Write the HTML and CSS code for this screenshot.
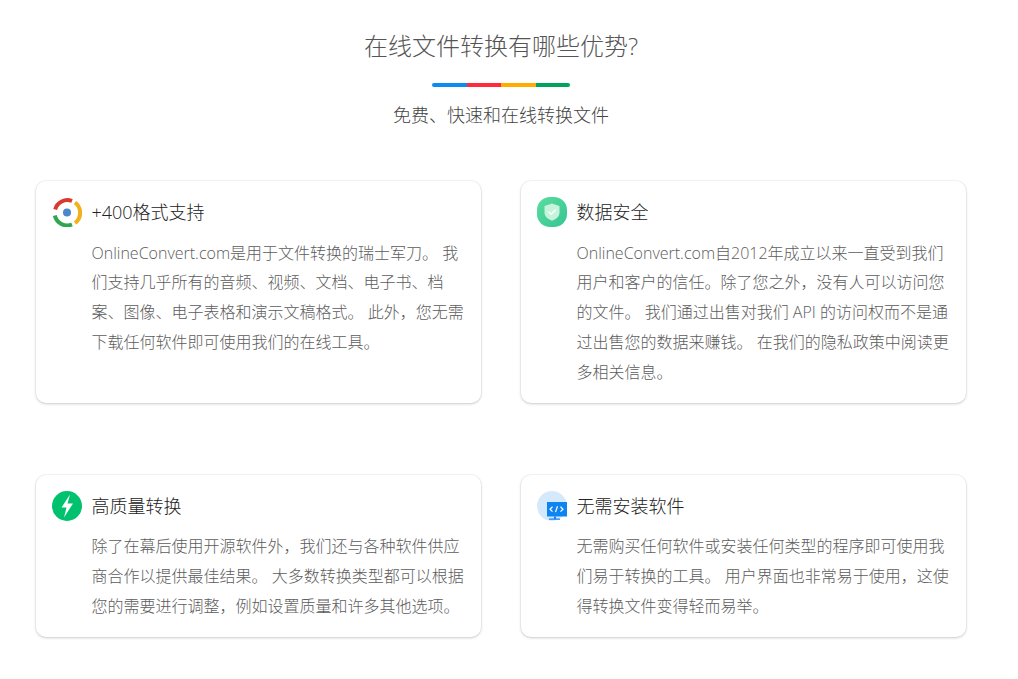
FILE: index.html
```html
<!DOCTYPE html>
<html lang="zh-CN">
<head>
<meta charset="utf-8">
<title>在线文件转换有哪些优势?</title>
<link rel="stylesheet" href="styles.css">
</head>
<body>
<main class="page">
  <header class="intro">
    <h1 class="headline">在线文件转换有哪些优势?</h1>
    <div class="rainbow"><span class="seg blue"></span><span class="seg red"></span><span class="seg amber"></span><span class="seg green"></span></div>
    <p class="subhead">免费、快速和在线转换文件</p>
  </header>
  <section class="cards">
    <article class="card">
      <div class="card-head">
        <svg class="icon" viewBox="0 0 30 30"><g fill="none" stroke-width="4"><path d="M3.200 12.500A12.500 12.500 0 0 1 20 4" stroke="#d93a2f"/><path d="M23 5.500A12.800 12.800 0 0 1 23 26" stroke="#f2b01c"/><path d="M2.800 18.500A12.800 12.800 0 0 0 20 27.500" stroke="#2fa650"/></g><circle cx="15" cy="15.500" r="4" fill="#4a87cb"/></svg>
        <h2 class="card-title">+400格式支持</h2>
      </div>
      <p class="card-text">OnlineConvert.com是用于文件转换的瑞士军刀。 我们支持几乎所有的音频、视频、文档、电子书、档案、图像、电子表格和演示文稿格式。 此外&#65292;您无需下载任何软件即可使用我们的在线工具。</p>
    </article>
    <article class="card">
      <div class="card-head">
        <svg class="icon" viewBox="0 0 30 30"><defs><linearGradient id="shieldbg" x1="0" y1="0" x2="1" y2="1"><stop offset="0" stop-color="#5bdc9f"/><stop offset="1" stop-color="#35c592"/></linearGradient></defs><rect width="30" height="30" rx="13" fill="url(#shieldbg)"/><path d="M15 6.500l7.500 2.400v6.400c0 4.300-3.200 7-7.500 8.400-4.300-1.400-7.500-4.100-7.500-8.400V8.900z" fill="#c6f3dc"/><path d="M11.500 14.800l2.600 2.500 4.600-4.600" fill="none" stroke="#fff" stroke-width="1.500"/></svg>
        <h2 class="card-title">数据安全</h2>
      </div>
      <p class="card-text">OnlineConvert.com自2012年成立以来一直受到我们用户和客户的信任。除了您之外&#65292;没有人可以访问您的文件。 我们通过出售对我们 API 的访问权而不是通过出售您的数据来赚钱。 在我们的隐私政策中阅读更多相关信息。</p>
    </article>
    <article class="card">
      <div class="card-head">
        <svg class="icon" viewBox="0 0 30 30"><circle cx="15" cy="15" r="15" fill="#00c16e"/><path d="M18 3.500L9.500 16.500h5L12 26.500l9-14h-5.500z" fill="#fff"/></svg>
        <h2 class="card-title">高质量转换</h2>
      </div>
      <p class="card-text">除了在幕后使用开源软件外&#65292;我们还与各种软件供应商合作以提供最佳结果。 大多数转换类型都可以根据您的需要进行调整&#65292;例如设置质量和许多其他选项。</p>
    </article>
    <article class="card">
      <div class="card-head">
        <svg class="icon" viewBox="0 0 30 30"><circle cx="15" cy="15" r="15" fill="#d5e9fd"/><path d="M10 11h20v14.500H10z" fill="#0d84f2"/><path d="M12 27.500h11v1.200H12z M17 25.500h2v2h-2z" fill="#0d84f2"/><path d="M15.500 15.800l-2.500 2.400 2.500 2.400M23.500 15.800l2.500 2.400-2.500 2.400M20.500 15.300l-2 5.800" fill="none" stroke="#fff" stroke-width="1.200"/></svg>
        <h2 class="card-title">无需安装软件</h2>
      </div>
      <p class="card-text">无需购买任何软件或安装任何类型的程序即可使用我们易于转换的工具。 用户界面也非常易于使用&#65292;这使得转换文件变得轻而易举。</p>
    </article>
  </section>
</main>
</body>
</html>
```
FILE: styles.css
```css
* { box-sizing: border-box; }
html, body { margin: 0; padding: 0; background: #fff; }
body { font-family: "Open Sans", "Noto Sans CJK SC", sans-serif; font-weight: 300; color: #555; }
.page { width: 1002px; padding: 28px 36px 42px; }
.intro { display: flex; flex-direction: column; align-items: center; }
.headline { margin: 0; font-size: 24px; line-height: 36px; font-weight: 300; color: #555; }
.rainbow { display: flex; width: 138px; height: 4px; margin-top: 19px; border-radius: 2px; overflow: hidden; }
.seg { flex: 1; }
.blue { background: #0a8cf0; }
.red { background: #ff2a3c; }
.amber { background: #ffab00; }
.green { background: #00a35b; }
.subhead { margin: 15px 0 0; font-size: 18px; line-height: 27px; color: #444; }
.cards { display: grid; grid-template-columns: 445px 445px; column-gap: 40px; row-gap: 72px; margin-top: 52px; }
.card { background: #fff; border-radius: 10px; padding: 16px 16px 15.4px; box-shadow: 0 0 0 1px rgba(0,0,0,.03), 0 1px 3px rgba(0,0,0,.18); }
.card-head { display: flex; align-items: center; gap: 9.5px; height: 30px; }
.icon { width: 30px; height: 30px; flex: none; }
.card-title { margin: 1px 0 0; font-size: 18px; line-height: 27px; font-weight: 300; color: #222; }
.card-text { margin: 11.6px 0 0 39.5px; font-size: 16px; line-height: 29.75px; color: #5c5c5c; }
```
